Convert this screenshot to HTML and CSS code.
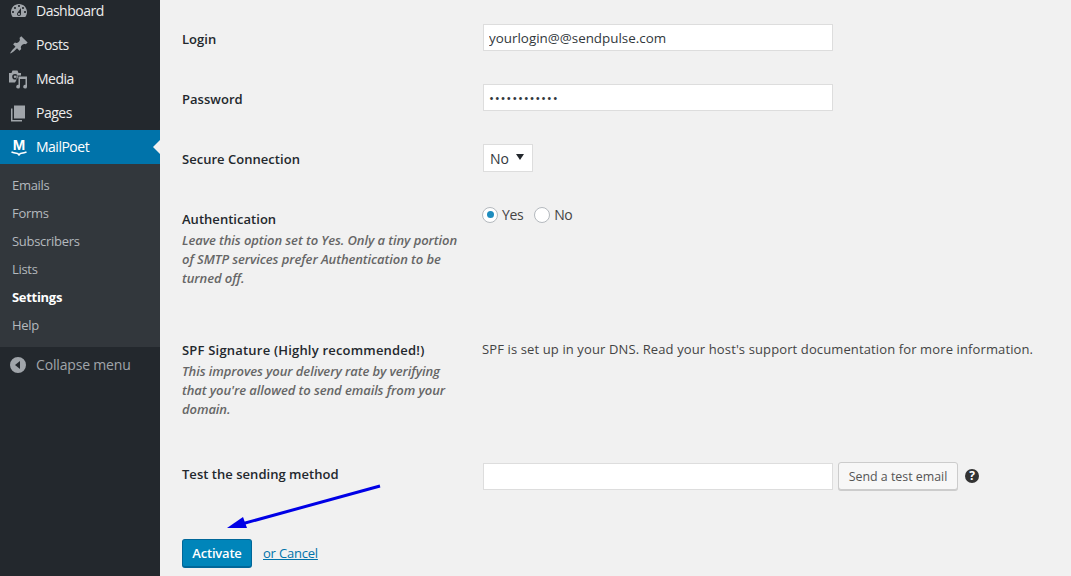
FILE: index.html
```html
<!DOCTYPE html>
<html lang="en">
<head>
<meta charset="utf-8">
<title>MailPoet Settings</title>
<link rel="stylesheet" href="styles.css">
</head>
<body>
<div class="page">
  <nav class="sidebar">
    <ul class="menu">
      <li class="item"><svg class="icon" viewBox="0 0 20 20"><path fill-rule="evenodd" d="M3.760 16h12.480c1.100-1.370 1.760-3.110 1.760-5 0-4.420-3.580-8-8-8s-8 3.580-8 8c0 1.890.66 3.630 1.760 5zM10 4c.55 0 1 .45 1 1s-.45 1-1 1-1-.45-1-1 .45-1 1-1zM6 6c.55 0 1 .45 1 1s-.45 1-1 1-1-.45-1-1 .45-1 1-1zm8 0c.55 0 1 .45 1 1s-.45 1-1 1-1-.45-1-1 .45-1 1-1zm-5.370 5.550L12 7v6c0 1.100-.9 2-2 2s-2-.9-2-2c0-.57.24-1.080.63-1.450zM4 10c.55 0 1 .45 1 1s-.45 1-1 1-1-.45-1-1 .45-1 1-1zm12 0c.55 0 1 .45 1 1s-.45 1-1 1-1-.45-1-1 .45-1 1-1zm-5 3c0-.55-.45-1-1-1s-1 .45-1 1 .45 1 1 1 1-.45 1-1z"/></svg><span>Dashboard</span></li>
      <li class="item"><svg class="icon" viewBox="0 0 20 20"><path d="M10.440 3.020l1.820-1.820 6.360 6.350-1.830 1.820c-1.050-.68-2.480-.57-3.410.36l-.75.75c-.92.93-1.040 2.350-.35 3.410l-1.830 1.820-2.410-2.410-2.800 2.790c-.42.42-3.380 2.710-3.800 2.290s1.860-3.390 2.280-3.810l2.790-2.790L4.100 9.360l1.830-1.820c1.050.69 2.480.57 3.410-.36l.75-.75c.93-.92 1.040-2.350.36-3.410z"/></svg><span>Posts</span></li>
      <li class="item"><svg class="icon" viewBox="0 0 20 20"><path fill-rule="evenodd" d="M0 4h2.500l1-2.500h5l1 2.500H12v2.500H7.500V11L6 13.500H0zM6 5a2.800 2.800 0 1 0 0 5.600A2.800 2.800 0 0 0 6 5zM6 6.600a1.200 1.200 0 1 1 0 2.400 1.200 1.200 0 0 1 0-2.400z"/><path d="M9.500 7.500H18v10.200a1.900 1.900 0 1 1-1.500-1.850V10H11v7.700a1.900 1.900 0 1 1-1.500-1.850z"/></svg><span>Media</span></li>
      <li class="item"><svg class="icon" viewBox="0 0 20 20"><path d="M5 2.500h11v13H5z"/><path d="M3.500 5.500v11.500H13v1.500H2V5.500z"/></svg><span>Pages</span></li>
      <li class="item item-current">
        <span class="logo"><span class="logo-m">M</span><svg class="logo-smile" viewBox="0 0 16 5"><path d="M.5 1c3 1.200 5 1.200 6.200 1.500L8 4l1.300-1.500C10.500 2.200 12.500 2.200 15.500 1" fill="none" stroke="#fff" stroke-width="1.500"/></svg></span>
        <span>MailPoet</span>
      </li>
    </ul>
    <ul class="submenu">
      <li>Emails</li>
      <li>Forms</li>
      <li>Subscribers</li>
      <li>Lists</li>
      <li class="sub-current">Settings</li>
      <li>Help</li>
    </ul>
    <div class="collapse"><svg class="icon" viewBox="0 0 20 20"><path fill-rule="evenodd" d="M10 2a8 8 0 1 1 0 16 8 8 0 0 1 0-16zM12 6 7 10l5 4z"/></svg><span>Collapse menu</span></div>
  </nav>

  <main class="content">
    <div class="row row-login">
      <div class="label"><strong>Login</strong></div>
      <div class="field"><input class="text" type="text" value="yourlogin@@sendpulse.com"></div>
    </div>
    <div class="row row-login">
      <div class="label"><strong>Password</strong></div>
      <div class="field"><input class="text pass" type="password" value="yourpassword"></div>
    </div>
    <div class="row row-login">
      <div class="label"><strong>Secure Connection</strong></div>
      <div class="field"><div class="select"><span>No</span><span class="caret"></span></div></div>
    </div>
    <div class="row row-auth">
      <div class="label">
        <strong>Authentication</strong>
        <p class="desc">Leave this option set to Yes. Only a tiny portion of SMTP services prefer Authentication to be turned off.</p>
      </div>
      <div class="field radios">
        <span class="radio-opt"><span class="radio radio-on"></span>Yes</span>
        <span class="radio-opt"><span class="radio"></span>No</span>
      </div>
    </div>
    <div class="row row-spf">
      <div class="label">
        <strong class="spf-label">SPF Signature (Highly recommended!)</strong>
        <p class="desc">This improves your delivery rate by verifying that you're allowed to send emails from your domain.</p>
      </div>
      <div class="field spf-text">SPF is set up in your DNS. Read your host's support documentation for more information.</div>
    </div>
    <div class="row row-test">
      <div class="label"><strong>Test the sending method</strong></div>
      <div class="field test-field">
        <input class="text" type="text">
        <button class="btn" type="button">Send a test email</button>
        <span class="help">?</span>
      </div>
    </div>
    <div class="actions">
      <button class="btn-primary" type="button">Activate</button>
      <a class="cancel" href="#">or Cancel</a>
    </div>
    <svg class="arrow" viewBox="0 0 160 50" width="160" height="50"><path d="M156 3 14 42" stroke="#0000e6" stroke-width="3" fill="none"/><path d="M3 45 19 34 23 45z" fill="#0000e6"/></svg>
  </main>
</div>
</body>
</html>
```

FILE: styles.css
```css
* { box-sizing: border-box; }
html, body { margin: 0; height: 100%; overflow: hidden; }
body {
  font-family: "Open Sans", "Liberation Sans", sans-serif;
  font-size: 13px;
  line-height: 19px;
  color: #444;
  background: #f1f1f1;
}
.page { display: flex; height: 576px; overflow: hidden; }

.sidebar {
  flex: 0 0 160px;
  background: #23282d;
  color: #eee;
  font-size: 14px;
}
.menu, .submenu { list-style: none; margin: 0; padding: 0; }
.menu { margin-top: -6px; }
.item {
  height: 34px;
  display: flex;
  align-items: center;
  gap: 7px;
  padding: 0 0 1px 9px;
  letter-spacing: -0.5px;
}
.icon { width: 20px; height: 20px; fill: #a0a5aa; flex: none; }
.item-current {
  position: relative;
  background: #0073aa;
  color: #fff;
}
.item-current::after {
  content: "";
  position: absolute;
  right: 0;
  top: 10px;
  border: 7px solid transparent;
  border-left-width: 0;
  border-right-color: #f1f1f1;
}
.logo { width: 20px; display: flex; flex-direction: column; align-items: center; flex: none; }
.logo-m { font-family: "Liberation Sans", sans-serif; font-weight: 700; font-size: 15px; line-height: 13px; letter-spacing: 0; }
.logo-smile { width: 16px; height: 5px; }
.submenu {
  background: #32373c;
  padding: 7px 0 8px;
  color: #b4b9be;
  font-size: 13px;
}
.submenu li { height: 28px; line-height: 28px; padding-left: 12px; letter-spacing: -0.3px; }
.submenu .sub-current { color: #fff; font-weight: 700; }
.collapse {
  height: 36px;
  display: flex;
  align-items: center;
  gap: 8px;
  padding: 0 0 1px 8px;
  color: #a0a5aa;
  font-size: 14px;
  letter-spacing: -0.17px;
}

.content { position: relative; flex: 1; padding: 24px 0 0 22px; min-width: 0; }
.row { display: grid; grid-template-columns: 301px 1fr; }
.row-login { height: 60px; }
.row-auth { height: 131px; }
.row-spf { height: 128px; }
.row-test { height: 76px; }
.label { padding-top: 6px; }
.row-test .label { padding-top: 2px; }
.label strong { font-weight: 600; color: #23282d; letter-spacing: 0.03px; }
.label .spf-label { letter-spacing: 0.2px; }
.desc {
  margin: 2px 0 0;
  width: 285px;
  font-size: 13px;
  font-style: italic;
  font-weight: 600;
  color: #666;
  letter-spacing: -0.08px;
}
.text {
  display: block;
  width: 350px;
  height: 27px;
  padding: 0 5px;
  border: 1px solid #ddd;
  background: #fff;
  font: 13.4px/19px "Open Sans", sans-serif;
  color: #32373c;
  outline: none;
  border-radius: 0;
}
.pass { letter-spacing: 0.75px; }
.select {
  width: 50px;
  height: 28px;
  display: flex;
  align-items: center;
  justify-content: space-between;
  padding: 0 8px 0 6px;
  background: #fff;
  border: 1px solid #ddd;
  color: #32373c;
  font-size: 14px;
}
.caret {
  margin-bottom: 3px;
  border: 4px solid transparent;
  border-top: 6px solid #23282d;
  border-bottom-width: 0;
}
.radios { display: flex; gap: 11px; padding-top: 1px; height: 20px; margin-left: -1px; font-size: 14px; }
.radio-opt { display: flex; align-items: center; gap: 4px; letter-spacing: -0.4px; }
.radio {
  width: 16px;
  height: 16px;
  border: 1px solid #b4b9be;
  border-radius: 50%;
  background: #fff;
  display: flex;
  align-items: center;
  justify-content: center;
}
.radio-on::before {
  content: "";
  width: 7px;
  height: 7px;
  border-radius: 50%;
  background: #1e8cbe;
}
.spf-text { padding-top: 5px; color: #444; letter-spacing: 0.12px; white-space: nowrap; margin-left: -1px; }
.test-field { display: flex; align-items: flex-start; gap: 5px; }
.btn {
  width: 120px;
  height: 28px;
  padding: 0 0 0;
  margin-top: -1px;
  border: 1px solid #ccc;
  border-radius: 3px;
  box-shadow: 0 1px 0 #ccc;
  background: #f7f7f7;
  color: #555;
  font: 12.4px/28px "Open Sans", sans-serif;
}
.help {
  margin: 6px 0 0 2px;
  width: 14px;
  height: 14px;
  border-radius: 50%;
  background: #333;
  color: #fff;
  font-weight: 700;
  font-size: 12px;
  line-height: 14px;
  text-align: center;
}
.actions { display: flex; align-items: center; gap: 11px; }
.btn-primary {
  width: 70px;
  height: 29px;
  padding: 0;
  border: 1px solid #006799;
  border-bottom-width: 2px;
  border-radius: 3px;
  background: #0085ba;
  color: #fff;
  font: 600 13px/26px "Open Sans", sans-serif;
  letter-spacing: -0.2px;
}
.cancel { color: #0073aa; text-decoration: underline; letter-spacing: -0.2px; }
.arrow { position: absolute; left: 64px; top: 483px; }
```
